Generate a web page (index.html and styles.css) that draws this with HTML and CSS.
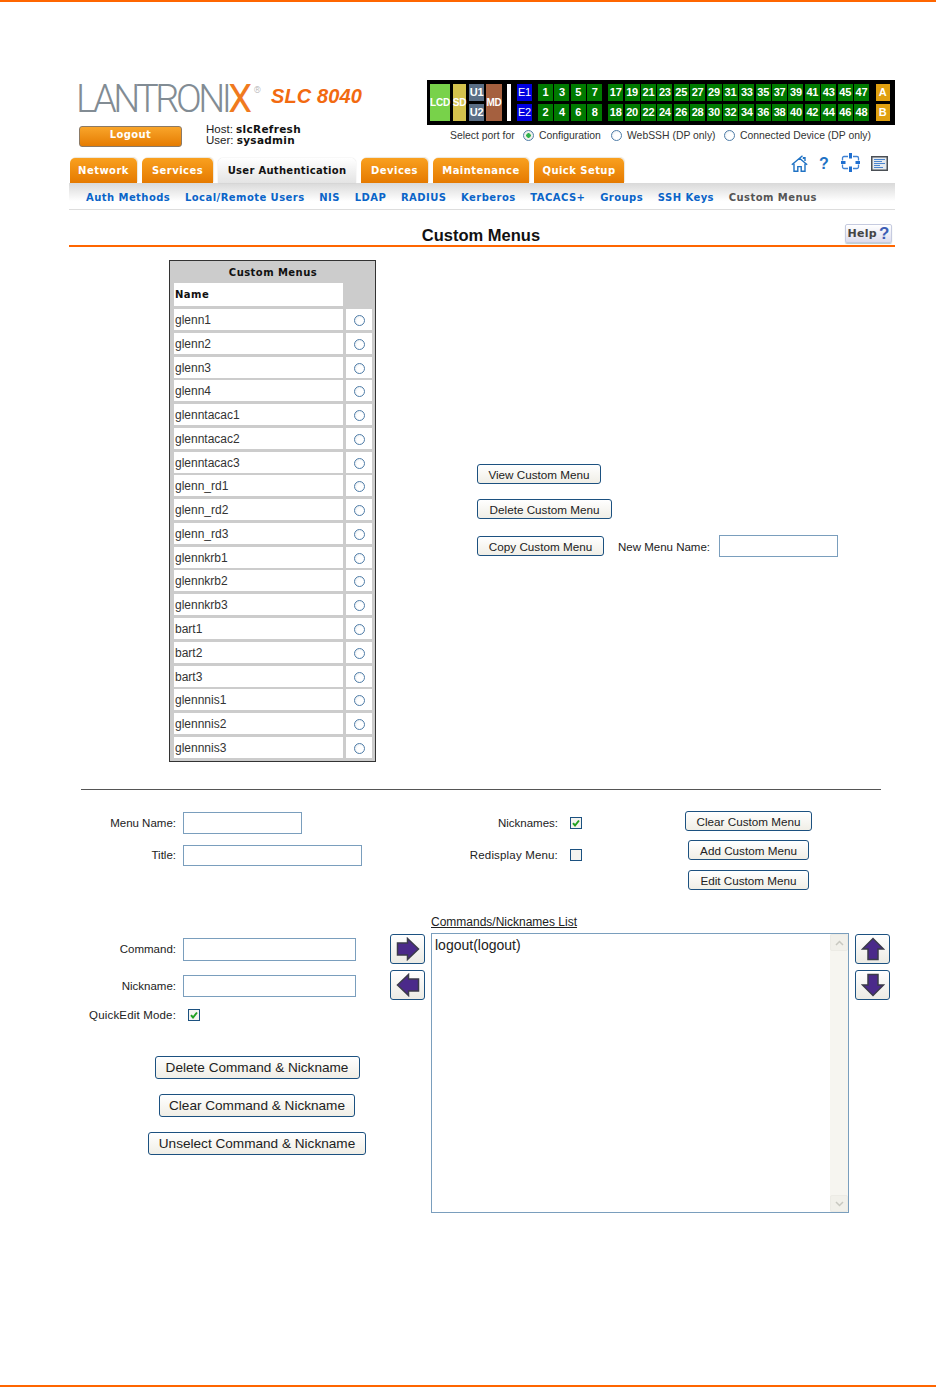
FILE: index.html
```html
<!DOCTYPE html>
<html lang="en">
<head>
<meta charset="utf-8">
<title>Custom Menus</title>
<link rel="stylesheet" href="styles.css">
</head>
<body>
<div class="page">
  <header class="masthead">
    <div class="brand">
      <div class="logo-row">
        <span class="logo">LANTRONI<span class="logo-x">X</span><sup class="logo-r">®</sup></span>
        <span class="model">SLC 8040</span>
      </div>
      <div class="session">
        <button class="logout" type="button">Logout</button>
        <div class="who">
          <div>Host: <b>slcRefresh</b></div>
          <div>User: <b>sysadmin</b></div>
        </div>
      </div>
    </div>
    <div class="ports-wrap">
      <div class="ports">
        <span class="p p-lcd">LCD</span>
        <span class="p p-sd">SD</span>
        <div class="pcol"><span class="p p-u">U1</span><span class="p p-u">U2</span></div>
        <span class="p p-md">MD</span>
        <span class="p-sep"></span>
        <div class="pcol"><span class="p p-e">E1</span><span class="p p-e">E2</span></div>
        <div class="pgrid pgrid-a">
          <span class="p">1</span><span class="p">2</span><span class="p">3</span><span class="p">4</span><span class="p">5</span><span class="p">6</span><span class="p">7</span><span class="p">8</span>
        </div>
        <div class="pgrid pgrid-b">
          <span class="p">17</span><span class="p">18</span><span class="p">19</span><span class="p">20</span><span class="p">21</span><span class="p">22</span><span class="p">23</span><span class="p">24</span><span class="p">25</span><span class="p">26</span><span class="p">27</span><span class="p">28</span><span class="p">29</span><span class="p">30</span><span class="p">31</span><span class="p">32</span><span class="p">33</span><span class="p">34</span><span class="p">35</span><span class="p">36</span><span class="p">37</span><span class="p">38</span><span class="p">39</span><span class="p">40</span><span class="p">41</span><span class="p">42</span><span class="p">43</span><span class="p">44</span><span class="p">45</span><span class="p">46</span><span class="p">47</span><span class="p">48</span>
        </div>
        <div class="pcol pcol-ab"><span class="p p-ab">A</span><span class="p p-ab">B</span></div>
      </div>
      <div class="port-mode">
        <span class="pm-lead">Select port for</span>
        <label class="pm pm-1"><input type="radio" name="mode" class="radio" checked>Configuration</label>
        <label class="pm pm-2"><input type="radio" name="mode" class="radio">WebSSH (DP only)</label>
        <label class="pm"><input type="radio" name="mode" class="radio">Connected Device (DP only)</label>
      </div>
    </div>
  </header>

  <nav class="tabbar">
    <a class="tab t-net">Network</a>
    <a class="tab t-srv">Services</a>
    <a class="tab tab-active">User Authentication</a>
    <a class="tab t-dev">Devices</a>
    <a class="tab t-mnt">Maintenance</a>
    <a class="tab t-qs">Quick Setup</a>
    <div class="tools">
      <svg class="i-home" viewBox="0 0 17 15" width="17" height="15"><path d="M.8 7.800 8.500 1.200l3-2.400M8.500 1.200l7.700 6.600M12.500 2V.8h1.500v3.200M3 6.800v7.400h3.800V9.600h3.400v4.600H14V6.800" fill="none" stroke="#1f72c4" stroke-width="1.400"/></svg>
      <span class="i-q">?</span>
      <svg class="i-full" viewBox="0 0 19 19" width="19" height="19"><path d="M7 3.500H3A1.500 1.500 0 0 0 1.500 5V7.500M12 3.500H16A1.500 1.500 0 0 1 17.500 5V7.500M7 15.500H3A1.500 1.500 0 0 1 1.500 14V11.500M12 15.500H16A1.500 1.500 0 0 0 17.500 14V11.500" fill="none" stroke="#3f82d4" stroke-width="1.300"/><path d="M9.500 0V5.500M9.500 13.500V19M0 9.500H4.500M14.500 9.500H19" stroke="#1f6fd0" stroke-width="3"/></svg>
      <svg class="i-doc" viewBox="0 0 17 15" width="17" height="15"><rect x=".75" y=".75" width="15.500" height="13.500" fill="#e4e9ee" stroke="#4a4f55" stroke-width="1.500"/><path d="M3 3.500h11M3 5.500h8M3 7.500h11M3 9.500h6M3 11.500h9" stroke="#4b85cf"/></svg>
    </div>
  </nav>

  <nav class="subnav">
    <a>Auth Methods</a><a>Local/Remote Users</a><a>NIS</a><a>LDAP</a><a>RADIUS</a><a>Kerberos</a><a>TACACS+</a><a>Groups</a><a>SSH Keys</a><a class="current">Custom Menus</a>
  </nav>

  <div class="titlebar">
    <h1>Custom Menus</h1>
    <span class="help">Help<i>?</i></span>
  </div>

  <main>
    <section class="menus">
      <div class="mtable">
        <div class="mtitle">Custom Menus</div>
        <div class="mhead">Name</div><div></div>
        <div class="mname">glenn1</div><div class="mpick"><input type="radio" name="m" class="radio"></div>
        <div class="mname">glenn2</div><div class="mpick"><input type="radio" name="m" class="radio"></div>
        <div class="mname">glenn3</div><div class="mpick"><input type="radio" name="m" class="radio"></div>
        <div class="mname">glenn4</div><div class="mpick"><input type="radio" name="m" class="radio"></div>
        <div class="mname">glenntacac1</div><div class="mpick"><input type="radio" name="m" class="radio"></div>
        <div class="mname">glenntacac2</div><div class="mpick"><input type="radio" name="m" class="radio"></div>
        <div class="mname">glenntacac3</div><div class="mpick"><input type="radio" name="m" class="radio"></div>
        <div class="mname">glenn_rd1</div><div class="mpick"><input type="radio" name="m" class="radio"></div>
        <div class="mname">glenn_rd2</div><div class="mpick"><input type="radio" name="m" class="radio"></div>
        <div class="mname">glenn_rd3</div><div class="mpick"><input type="radio" name="m" class="radio"></div>
        <div class="mname">glennkrb1</div><div class="mpick"><input type="radio" name="m" class="radio"></div>
        <div class="mname">glennkrb2</div><div class="mpick"><input type="radio" name="m" class="radio"></div>
        <div class="mname">glennkrb3</div><div class="mpick"><input type="radio" name="m" class="radio"></div>
        <div class="mname">bart1</div><div class="mpick"><input type="radio" name="m" class="radio"></div>
        <div class="mname">bart2</div><div class="mpick"><input type="radio" name="m" class="radio"></div>
        <div class="mname">bart3</div><div class="mpick"><input type="radio" name="m" class="radio"></div>
        <div class="mname">glennnis1</div><div class="mpick"><input type="radio" name="m" class="radio"></div>
        <div class="mname">glennnis2</div><div class="mpick"><input type="radio" name="m" class="radio"></div>
        <div class="mname">glennnis3</div><div class="mpick"><input type="radio" name="m" class="radio"></div>
      </div>
      <div class="mactions">
        <button class="btn btn-view" type="button">View Custom Menu</button>
        <button class="btn btn-del" type="button">Delete Custom Menu</button>
        <div class="copyrow">
          <button class="btn btn-copy" type="button">Copy Custom Menu</button>
          <label class="lbl">New Menu Name:</label>
          <input class="txt txt-new" type="text">
        </div>
      </div>
    </section>

    <hr class="rule">

    <section class="config">
      <div class="cfg-left">
        <div class="field"><label class="lbl">Menu Name:</label><input class="txt txt-name" type="text"></div>
        <div class="field field-title"><label class="lbl">Title:</label><input class="txt txt-title" type="text"></div>
      </div>
      <div class="cfg-mid">
        <div class="cfield"><label class="lbl">Nicknames:</label>
          <svg class="cb" viewBox="0 0 12 12" width="12" height="12"><rect x=".5" y=".5" width="11" height="11" fill="#f4f4f0" stroke="#1c5180"/><path d="M3 6.200 5 8.500 9 3.500" fill="none" stroke="#21a121" stroke-width="2"/></svg>
        </div>
        <div class="cfield cfield-2"><label class="lbl lbl-wide">Redisplay Menu:</label>
          <svg class="cb" viewBox="0 0 12 12" width="12" height="12"><rect x=".5" y=".5" width="11" height="11" fill="#f4f4f0" stroke="#1c5180"/></svg>
        </div>
      </div>
      <div class="cfg-right">
        <button class="btn btn-clear" type="button">Clear Custom Menu</button>
        <button class="btn btn-wide" type="button">Add Custom Menu</button>
        <button class="btn btn-wide" type="button">Edit Custom Menu</button>
      </div>
    </section>

    <section class="cmds">
      <div class="cmd-left">
        <div class="field"><label class="lbl">Command:</label><input class="txt txt-cmd" type="text"></div>
        <div class="field field-nick"><label class="lbl">Nickname:</label><input class="txt txt-nick" type="text"></div>
        <div class="field field-quick"><label class="lbl lbl-wide">QuickEdit Mode:</label>
          <svg class="cb cb-quick" viewBox="0 0 12 12" width="12" height="12"><rect x=".5" y=".5" width="11" height="11" fill="#f4f4f0" stroke="#1c5180"/><path d="M3 6.200 5 8.500 9 3.500" fill="none" stroke="#21a121" stroke-width="2"/></svg>
        </div>
        <div class="bigbtns">
          <button class="btn btn-big" type="button">Delete Command &amp; Nickname</button>
          <button class="btn btn-big" type="button">Clear Command &amp; Nickname</button>
          <button class="btn btn-big" type="button">Unselect Command &amp; Nickname</button>
        </div>
      </div>
      <div class="arrows">
        <button class="arrow" type="button" aria-label="Add"><svg viewBox="0 0 24 24" width="24" height="24"><path d="M1.500 6H11.500V1.500L22.500 12 11.500 22.500V18H1.500Z" fill="#4b2a8a" stroke="#3b3b4a" stroke-width="1.500"/></svg></button>
        <button class="arrow" type="button" aria-label="Remove"><svg viewBox="0 0 24 24" width="24" height="24"><path d="M22.500 6H12.500V1.500L1.500 12 12.500 22.500V18H22.500Z" fill="#4b2a8a" stroke="#3b3b4a" stroke-width="1.500"/></svg></button>
      </div>
      <div class="listcol">
        <div class="listlabel">Commands/Nicknames List</div>
        <div class="listbox">
          <div class="listtext">logout(logout)</div>
          <div class="scroll">
            <span class="sb sb-up"><svg viewBox="0 0 9 6" width="9" height="6"><path d="M1 5 4.500 1.500 8 5" fill="none" stroke="#c8c8c0" stroke-width="1.500"/></svg></span>
            <span class="sb sb-down"><svg viewBox="0 0 9 6" width="9" height="6"><path d="M1 1 4.500 4.500 8 1" fill="none" stroke="#c8c8c0" stroke-width="1.500"/></svg></span>
          </div>
        </div>
      </div>
      <div class="arrows arrows-r">
        <button class="arrow" type="button" aria-label="Up"><svg viewBox="0 0 24 24" width="24" height="24"><path d="M7 22.500V12H1.500L12 1.500 22.500 12H17V22.500Z" fill="#4b2a8a" stroke="#3b3b4a" stroke-width="1.500"/></svg></button>
        <button class="arrow" type="button" aria-label="Down"><svg viewBox="0 0 24 24" width="24" height="24"><path d="M7 1.500V12H1.500L12 22.500 22.500 12H17V1.500Z" fill="#4b2a8a" stroke="#3b3b4a" stroke-width="1.500"/></svg></button>
      </div>
    </section>
  </main>
</div>
</body>
</html>
```

FILE: styles.css
```css
* { box-sizing: border-box; }
html, body { margin: 0; padding: 0; background: #fff; }
body { font-family: "Liberation Sans", Arial, sans-serif; color: #222; font-size: 11.5px; }

.page {
  width: 936px;
  height: 1387px;
  padding: 78px 41px 0 69px;
  border-top: 2px solid #f60;
  border-bottom: 2px solid #f60;
  overflow: hidden;
}

/* masthead */
.masthead { display: flex; height: 78px; }
.brand { width: 358px; }
.logo-row { display: flex; align-items: center; height: 38px; padding-left: 7px; }
.logo {
  font-family: Roboto, "Liberation Sans", sans-serif;
  font-weight: 300;
  font-size: 38px;
  line-height: 38px;
  letter-spacing: -3.500px;
  color: #828c94;
  width: 195px;
  white-space: nowrap;
}
.logo-x { color: #f07a1e; font-weight: 400; }
.logo-r { font-size: 9px; letter-spacing: 0; vertical-align: 19px; line-height: 0; margin-left: 5px; color: #aaa; }
.model {
  margin-bottom: 6px;
  font-size: 20px;
  font-style: italic;
  font-weight: bold;
  color: #f26a10;
  letter-spacing: .1px;
  line-height: 22px;
}
.session { display: flex; margin-top: 8px; padding-left: 10px; }
.logout {
  width: 103px;
  height: 21px;
  padding: 0 0 4px;
  border: 1px solid #8b7a66;
  border-radius: 3px;
  background: linear-gradient(#f9a52a, #e57c02);
  color: #fff;
  font: bold 10px "DejaVu Sans", sans-serif;
  letter-spacing: .4px;
}
.who { margin: -2px 0 0 24px; line-height: 11px; font-size: 11.5px; color: #222; }
.who b { font-family: "DejaVu Sans", sans-serif; font-size: 10.5px; color: #111; letter-spacing: .3px; }

.ports-wrap { width: 468px; }
.ports {
  display: flex;
  height: 45px;
  padding: 4px 0 0 3px;
  background: #000;
  align-items: flex-start;
}
.p {
  display: flex;
  align-items: center;
  justify-content: center;
  width: 15px;
  height: 16.7px;
  background: #007a00;
  color: #fff;
  font: bold 11px "Liberation Sans", sans-serif;
  letter-spacing: -.2px;
  white-space: nowrap;
}
.p-lcd { width: 20px; height: 36.7px; background: #78d24a; font-size: 10px; }
.p-sd { width: 13px; height: 36.7px; margin-left: 3px; background: #d4c24d; font-size: 10px; }
.p-md { width: 16px; height: 36.7px; margin-left: 2px; background: #a5603f; font-size: 10px; }
.p-u { background: #5a6e85; font-size: 11px; }
.p-e { background: #0000e0; font-size: 11px; font-weight: normal; }
.p-ab { width: 14px; background: #e0a010; }
.pcol { display: grid; row-gap: 3.3px; margin-left: 3px; }
.pcol-ab { margin-left: 6.500px; }
.p-sep { width: 4px; height: 36.7px; margin: 0 6px 0 5px; background: #fff; }
.p-sep + .pcol { margin-left: 0; }
.pgrid { display: grid; grid-template-rows: 16.7px 16.7px; grid-auto-flow: column; grid-auto-columns: 15px; column-gap: 1.400px; row-gap: 3.300px; }
.pgrid-a { margin-left: 6px; }
.pgrid-b { margin-left: 6px; }
.port-mode { display: flex; align-items: center; height: 20px; font-size: 10.4px; color: #333; padding-left: 23px; }
.pm-lead { width: 73px; }
.pm { display: flex; align-items: center; gap: 5px; }
.pm-1 { width: 88px; }
.pm-2 { width: 113px; }

.radio {
  appearance: none;
  width: 11px;
  height: 11px;
  margin: 0;
  border: 1px solid #4f7da8;
  border-radius: 50%;
  background: radial-gradient(circle at 60% 60%, #fff 40%, #dfe5ea 100%);
  flex: none;
}
.radio:checked { background: radial-gradient(circle, #2fb24a 0 2px, #f0f0ea 2.500px); }

/* tabs */
.tabbar { display: flex; height: 25px; padding-left: 1px; }
.tab {
  display: flex;
  align-items: center;
  justify-content: center;
  height: 25px;
  margin-right: 5px;
  padding-bottom: 1px;
  border-radius: 5px 5px 0 0;
  background: linear-gradient(#f9a01f, #e57a00);
  color: #fff;
  font: bold 10px "DejaVu Sans", sans-serif;
  letter-spacing: .45px;
  box-shadow: 1px -1px 1px #ece6da;
}
.t-net, .t-dev { width: 67px; }
.t-srv { width: 71px; }
.t-mnt { width: 96px; }
.t-qs { width: 90px; }
.tab-active {
  width: 138px;
  background: linear-gradient(#fff, #e4e4e4);
  color: #111;
  letter-spacing: .3px;
  box-shadow: 0 0 1px #bbb;
}
.tools { position: relative; flex: 1; }
.tools svg, .i-q { position: absolute; }
.i-home { left: 162px; top: -1px; overflow: visible; }
.i-q { left: 190px; top: -3px; font: bold 16px "Liberation Sans", sans-serif; color: #1f72c4; }
.i-full { left: 212px; top: -5px; }
.i-doc { left: 242px; top: -2px; }

.subnav {
  display: flex;
  gap: 14.700px;
  height: 27px;
  padding: 3px 0 0 17px;
  align-items: center;
  background: linear-gradient(#d9d9d9, #fff 70%);
  border-bottom: 1px solid #ddd;
}
.subnav a { color: #0a64c8; font: bold 10px "DejaVu Sans", sans-serif; letter-spacing: .45px; white-space: nowrap; }
.subnav .current { color: #555; }

.titlebar {
  display: flex;
  align-items: flex-end;
  justify-content: center;
  position: relative;
  height: 37px;
  border-bottom: 2px solid #f60;
}
.titlebar h1 { margin: 0 2px 1px 0; font-size: 16.500px; line-height: 18px; color: #111; font-weight: bold; }
.help {
  position: absolute;
  right: 3px;
  top: 14px;
  width: 47px;
  height: 19px;
  display: flex;
  align-items: center;
  justify-content: center;
  border: 1px solid #c6cbe0;
  border-radius: 2px;
  background: linear-gradient(#fff, #dde);
  box-shadow: 0 1px 1px #bcc;
  font: bold 11px "DejaVu Sans", sans-serif;
  letter-spacing: .3px;
  color: #444;
}
.help i { font: bold 17px "Liberation Sans", sans-serif; color: #3d5eb5; margin-left: 2px; }

/* menu table */
.menus { display: flex; padding: 13px 0 0 100px; }
.mtable {
  display: grid;
  grid-template-columns: 169px 26px;
  grid-template-rows: 19.500px 23px repeat(19, 21px);
  column-gap: 3px;
  row-gap: 2.780px;
  width: 207px;
  height: 502px;
  padding: 0 3px 0 4px;
  border: 1px solid #333;
  background: #ccc;
  align-content: start;
}
.mtitle {
  grid-column: 1 / 3;
  text-align: center;
  font: bold 10px/23px "DejaVu Sans", sans-serif;
  letter-spacing: .45px;
  color: #111;
}
.mhead {
  padding-left: 1px;
  background: #fff;
  font: bold 10px/24px "DejaVu Sans", sans-serif;
  letter-spacing: .45px;
  color: #111;
}
.mname { padding-left: 1px; background: #fff; font-size: 12px; line-height: 23px; height: 21px; color: #333; }
.mpick { display: flex; align-items: center; justify-content: center; background: #fff; padding: 2px 0 0 1px; }

.mactions { margin-left: 101px; padding-top: 204px; display: flex; flex-direction: column; align-items: flex-start; }
.btn {
  height: 20px;
  padding: 1px 0 0;
  border: 1px solid #1c5180;
  border-radius: 3px;
  background: linear-gradient(#fff, #f0eee6);
  font: 11.700px "Liberation Sans", sans-serif;
  color: #222;
  white-space: nowrap;
}
.btn-view { width: 124px; }
.btn-del { width: 135px; }
.btn-copy { width: 127px; }
.mactions > .btn + .btn { margin-top: 15px; }
.copyrow { display: flex; align-items: center; margin-top: 16px; }
.copyrow .lbl { margin: 0 9px 0 14px; padding-top: 2px; }
.lbl { color: #222; font-size: 11.500px; white-space: nowrap; }
.lbl-wide { letter-spacing: .17px; }
.txt { height: 22px; padding: 0 3px; border: 1px solid #7a9ebd; background: #fff; display: block; }
.txt-new { width: 119px; }

.rule { height: 1px; margin: 27px 14px 0 12px; border: 0; background: #555; }

/* config */
.config { display: flex; height: 100px; padding-top: 22px; }
.cfg-left { width: 400px; }
.field { display: flex; align-items: center; gap: 7px; }
.field .lbl { width: 107px; text-align: right; padding-bottom: 1px; }
.field-title { margin-top: 11px; }
.txt-name { width: 119px; }
.txt-title { width: 179px; height: 21px; }
.cfg-mid { width: 216px; }
.cfield { display: flex; align-items: center; gap: 12px; height: 22px; }
.cfield .lbl { width: 89px; text-align: right; }
.cfield-2 { margin-top: 10px; }
.cb { flex: none; }
.cfg-right { width: 127px; display: flex; flex-direction: column; align-items: center; margin-top: -1px; }
.btn-clear { width: 127px; }
.btn-wide { width: 121px; margin-top: 9px; }
.btn-wide + .btn-wide { margin-top: 10px; }

/* commands */
.cmds { display: flex; margin-top: 24px; }
.cmd-left { width: 321px; padding-top: 24px; }
.txt-cmd { width: 173px; height: 23px; }
.txt-nick { width: 173px; height: 22px; }
.field-nick { margin-top: 14px; }
.field-quick { margin-top: 7px; height: 22px; }
.cb-quick { margin-left: 5px; }
.bigbtns { display: flex; flex-direction: column; align-items: center; width: 218px; margin: 30px 0 0 79px; }
.btn-big { height: 23px; padding: 0; font-size: 13.600px; }
.bigbtns .btn-big:nth-child(1) { width: 205px; }
.bigbtns .btn-big:nth-child(2) { width: 196px; margin-top: 15px; }
.bigbtns .btn-big:nth-child(3) { width: 218px; margin-top: 15px; }

.arrows { width: 35px; padding-top: 20px; display: flex; flex-direction: column; gap: 6px; }
.arrows-r { margin-left: 6px; }
.arrow {
  display: flex;
  align-items: center;
  justify-content: center;
  width: 35px;
  height: 30px;
  padding: 0;
  border: 1px solid #1c5180;
  border-radius: 3px;
  background: linear-gradient(#fff, #ecebe4);
}
.listcol { width: 418px; margin-left: 6px; }
.listlabel { height: 19px; padding-top: 1px; font-size: 12px; line-height: 14px; text-decoration: underline; color: #222; }
.listbox { display: flex; height: 280px; border: 1px solid #7a9ebd; background: #fff; }
.listtext { flex: 1; padding: 3px 3px; font-size: 14px; line-height: 16px; color: #222; }
.scroll { display: flex; flex-direction: column; justify-content: space-between; width: 18px; background: #f6f5f0; }
.sb { display: flex; align-items: center; justify-content: center; height: 17px; background: #f1f0ea; border: 1px solid #ecebe5; border-radius: 2px; }
```
